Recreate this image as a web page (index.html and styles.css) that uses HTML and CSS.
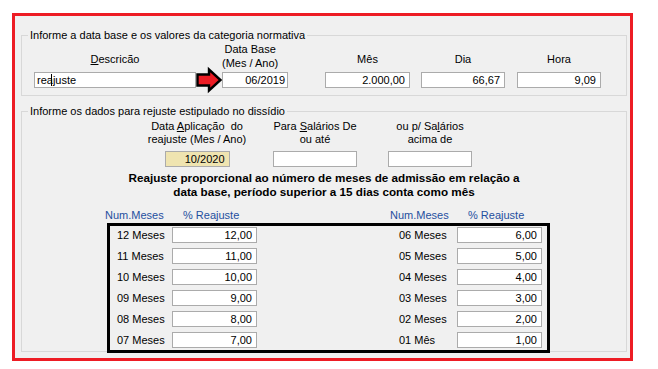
FILE: index.html
```html
<!DOCTYPE html>
<html lang="pt-BR">
<head>
<meta charset="utf-8">
<title>Reajuste</title>
<link rel="stylesheet" href="styles.css">
</head>
<body>
<div class="frame">
  <div class="group g1">
    <span class="legend">Informe a data base e os valores da categoria normativa</span>
    <div class="row1">
      <div class="col c-desc">
        <span class="lbl one"><u>D</u>escricão</span>
        <div class="field left">rea<span class="caret"></span>juste</div>
      </div>
      <svg class="arrow" width="26" height="24" viewBox="0 0 26 24">
        <polygon points="1.5,6.5 13,6.5 13,1.5 24.5,12 13,22.5 13,17.5 1.5,17.5" fill="#ed1c24" stroke="#000" stroke-width="2.4" stroke-linejoin="miter"/>
      </svg>
      <div class="col c-data">
        <span class="lbl two">Data Base<br>(Mes / Ano)</span>
        <div class="field tight">06/2019</div>
      </div>
      <div class="col c-mes">
        <span class="lbl one">Mês</span>
        <div class="field">2.000,00</div>
      </div>
      <div class="col c-dia">
        <span class="lbl one">Dia</span>
        <div class="field">66,67</div>
      </div>
      <div class="col c-hora">
        <span class="lbl one">Hora</span>
        <div class="field">9,09</div>
      </div>
    </div>
  </div>

  <div class="group g2">
    <span class="legend">Informe os dados para rejuste estipulado no dissídio</span>
    <div class="row2">
      <div class="col c-apl">
        <span class="lbl2">Data <u>A</u>plicação&nbsp; do<br>reajuste (Mes / Ano)</span>
        <div class="field tan">10/2020</div>
      </div>
      <div class="col c-ate">
        <span class="lbl2">Para <u>S</u>alários De<br>ou até</span>
        <div class="field"></div>
      </div>
      <div class="col c-acima">
        <span class="lbl2">ou p/ Sa<u>l</u>ários<br>acima de</span>
        <div class="field"></div>
      </div>
    </div>
    <p class="note">Reajuste proporcional ao número de meses de admissão em relação a<br>data base, período superior a 15 dias conta como mês</p>
    <div class="heads">
      <span class="h1">Num.Meses</span>
      <span class="h2">% Reajuste</span>
      <span class="h3">Num.Meses</span>
      <span class="h4">% Reajuste</span>
    </div>
    <div class="tbl">
      <span class="m">12 Meses</span><div class="field">12,00</div>
      <span class="m r">06 Meses</span><div class="field">6,00</div>
      <span class="m">11 Meses</span><div class="field">11,00</div>
      <span class="m r">05 Meses</span><div class="field">5,00</div>
      <span class="m">10 Meses</span><div class="field">10,00</div>
      <span class="m r">04 Meses</span><div class="field">4,00</div>
      <span class="m">09 Meses</span><div class="field">9,00</div>
      <span class="m r">03 Meses</span><div class="field">3,00</div>
      <span class="m">08 Meses</span><div class="field">8,00</div>
      <span class="m r">02 Meses</span><div class="field">2,00</div>
      <span class="m">07 Meses</span><div class="field">7,00</div>
      <span class="m r">01 Mês</span><div class="field">1,00</div>
    </div>
  </div>
</div>
</body>
</html>
```

FILE: styles.css
```css
body {
  margin: 0;
  background: #ffffff;
  font-family: "Liberation Sans", Arial, sans-serif;
  font-size: 11px;
  color: #000000;
}

.frame {
  margin: 13px 0 0 12px;
  width: 621px;
  height: 348px;
  box-sizing: border-box;
  border: 3px solid #ed1c24;
  background: #f0f0f0;
  padding: 19px 0 0 6px;
}

.group {
  position: relative;
  width: 606px;
  box-sizing: border-box;
  border: 1px solid #d8d8d8;
}

.g1 {
  height: 61px;
  padding: 6px 0 0 12px;
}

.g2 {
  height: 241px;
  margin-top: 15px;
  padding: 8px 0 0 0;
}

.legend {
  position: absolute;
  left: 6px;
  top: -7px;
  padding: 0 2px;
  background: #f0f0f0;
  line-height: 13px;
  white-space: nowrap;
}

.row1 {
  display: flex;
  align-items: flex-end;
}

.col {
  display: flex;
  flex-direction: column;
  align-items: center;
}

.col > .field {
  align-self: stretch;
}

.lbl {
  line-height: 14px;
  text-align: center;
  white-space: nowrap;
}

.lbl.one {
  margin-bottom: 6px;
}

.lbl.two {
  margin-bottom: 2px;
}

.field {
  height: 16px;
  box-sizing: border-box;
  border: 1px solid #ababab;
  background: #ffffff;
  line-height: 14px;
  padding: 0 4px;
  text-align: right;
  white-space: nowrap;
  overflow: hidden;
}

.field.left {
  text-align: left;
  padding-left: 2px;
}

.field.tight {
  padding-right: 2px;
}

.field.tan {
  background: #efe4b0;
}

.caret {
  display: inline-block;
  width: 1px;
  height: 12px;
  background: #000;
  vertical-align: -2px;
  margin-left: -2px;
  margin-right: 1px;
}

.c-desc { width: 162px; }

.arrow {
  flex: none;
  margin-bottom: -4px;
  overflow: visible;
}

.c-data {
  width: 66px;
  align-items: flex-start;
}

.c-mes { width: 85px; margin-left: 37px; }
.c-dia { width: 84px; margin-left: 11px; }
.c-hora { width: 84px; margin-left: 12px; }

.row2 {
  display: flex;
  padding-left: 125px;
}

.lbl2 {
  line-height: 13px;
  text-align: center;
  white-space: nowrap;
  margin-bottom: 5px;
}

.c-apl { width: 100px; }
.c-apl > .field { align-self: center; width: 65px; }
.c-ate { width: 84px; margin-left: 26px; }
.c-acima { width: 84px; margin-left: 31px; }

.note {
  margin: 4px 0 0 0;
  font-weight: bold;
  font-size: 11.7px;
  line-height: 14px;
  text-align: center;
}

.heads {
  display: flex;
  margin-top: 10px;
  line-height: 13px;
  color: #1f4f9f;
  white-space: nowrap;
}

.h1 { margin-left: 83px; width: 78px; }
.h2 { width: 207px; }
.h3 { width: 78px; }

.tbl {
  margin: 1px 0 0 85px;
  width: 443px;
  height: 130px;
  box-sizing: border-box;
  border: 3px solid #000000;
  padding: 1px 5px 2px 7px;
  display: grid;
  grid-template-columns: 55px 85px 142px 58px 85px;
  grid-auto-rows: 16px;
  row-gap: 5px;
  align-items: center;
  position: relative;
}

.m {
  white-space: nowrap;
  line-height: 13px;
}

.m.r {
  grid-column-start: 4;
}
```
